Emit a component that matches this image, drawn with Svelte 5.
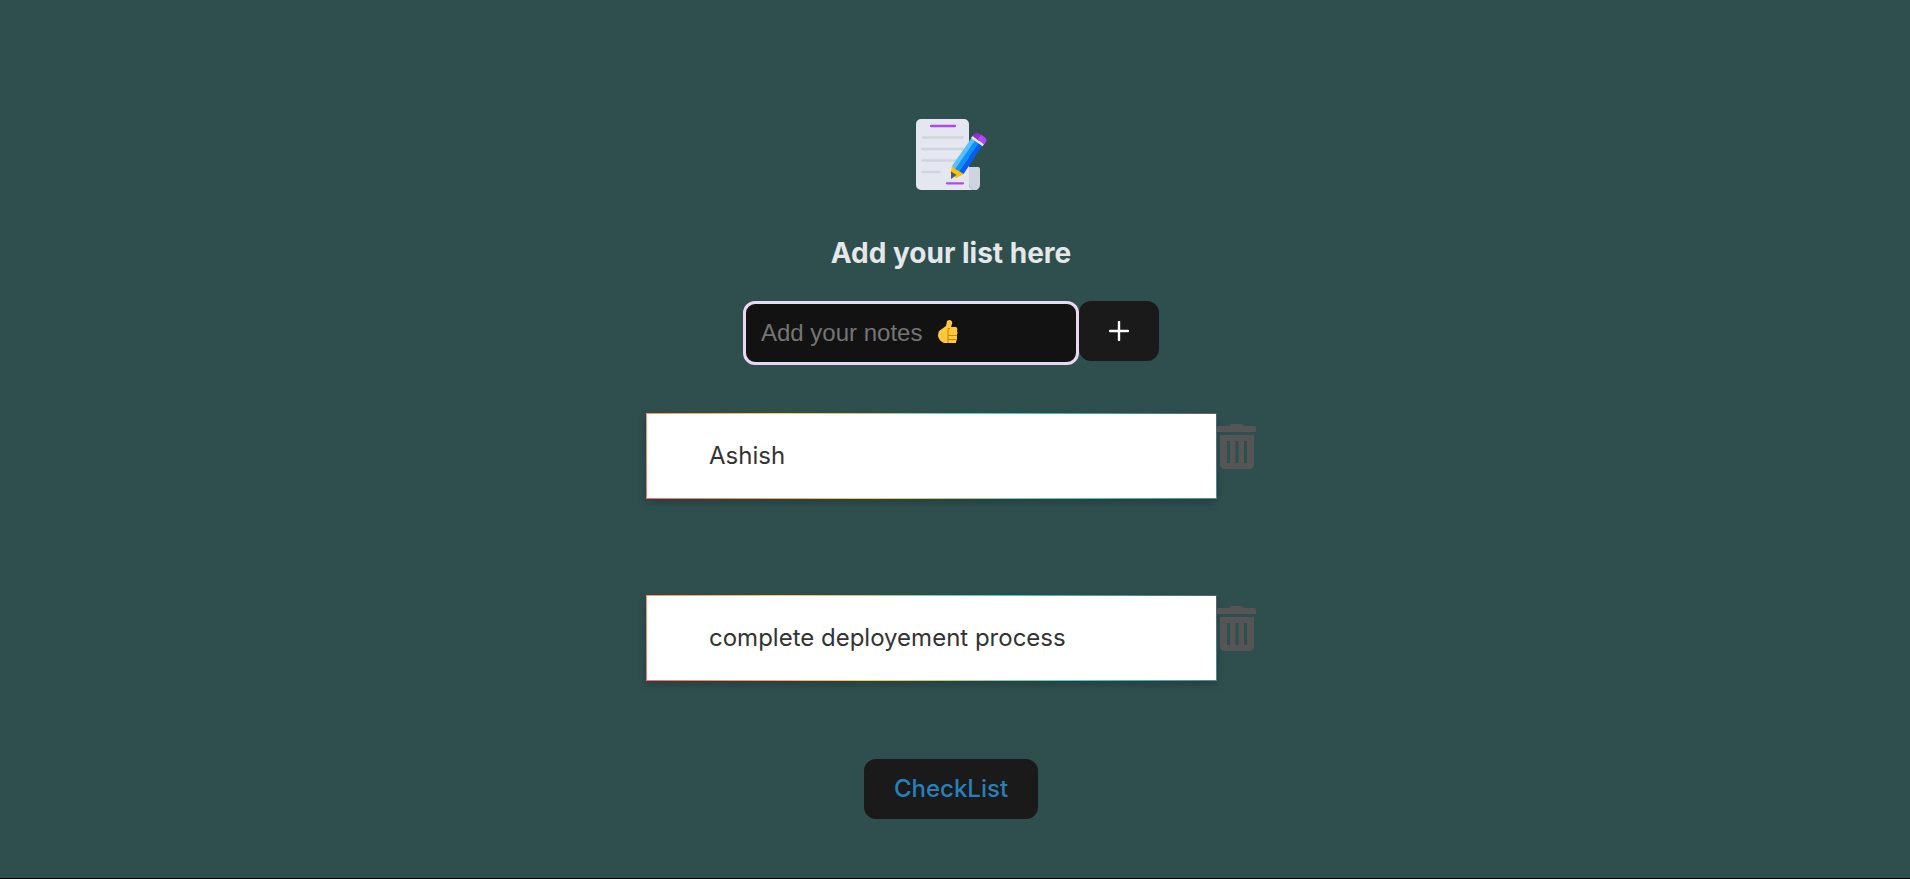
<script>
  let notes = $state(['Ashish', 'complete deployement process']);
  let draft = $state('');

  function add(event) {
    event.preventDefault();
    if (draft.trim()) {
      notes.push(draft.trim());
      draft = '';
    }
  }
</script>

<main>
  <svg class="logo" viewBox="0 0 71 71" aria-hidden="true">
    <path d="M5 0h43a5 5 0 0 1 5 5v60a6 6 0 0 0 5 6H5a5 5 0 0 1-5-5V5a5 5 0 0 1 5-5z" fill="#e4e7ef" />
    <path d="M53 48v17a6 6 0 0 0 5 6 5 5 0 0 0 6-5V50a2 2 0 0 0-2-2z" fill="#ced5e0" />
    <path d="M6.500 18.500h40M6.500 30h40M6.500 41.500h40M6.500 53h17" stroke="#ced5e0" stroke-width="2.300" stroke-linecap="round" />
    <path d="M15 7h24M31 64.300h16" stroke="#b446f5" stroke-width="2.300" stroke-linecap="round" />
    <path d="M36 47l12 8-8 4-5.500-5z" fill="#ffbe00" />
    <path d="M35 52.500l5.500 3.500-5.500 4z" fill="#465a7f" />
    <path d="M36 47L55.500 19l4 2.700L39 50z" fill="#5cbeff" />
    <path d="M39 50L59 21.500l4 2.700L43 52z" fill="#0a93ff" />
    <path d="M43 52l20-28 3.500 2.500L47.500 55z" fill="#055fea" />
    <path d="M55 19l2-2.500 11.500 8-2 2.700z" fill="#e9edf5" />
    <path d="M56.500 17l2-2a4 4 0 0 1 5 0l3 2-3.500 5z" fill="#8e30d2" />
    <path d="M61.500 20.500l3.500-5 4 3a3.500 3.500 0 0 1 1 4.500l-2 2.500z" fill="#b446f5" />
  </svg>

  <h1>Add your list here</h1>

  <form onsubmit={add}>
    <div class="field">
      <input type="text" aria-label="Add your notes" placeholder="Add your notes" bind:value={draft} />
      {#if !draft}
        <svg class="thumb" viewBox="0 0 20 24" aria-hidden="true">
          <path d="M1 11L8 6 9 1q1-1 3-1 3 1 2 4l-1 3h5q2 1 1 4 1 1 0 4v4q-1 2-1 4H6q-5-2-6-7 0-3 1-5z" fill="#ffc83d" />
          <path d="M10 23V8.500h2M10 15.500h9M10 19.500h8" fill="none" stroke="#d67d00" />
        </svg>
      {/if}
    </div>
    <button class="add" aria-label="Add note">
      <svg viewBox="0 0 20 20" aria-hidden="true"><path d="M10 1v18M1 10h18" stroke="#fff" stroke-width="2.400" stroke-linecap="round" /></svg>
    </button>
  </form>

  <ul>
    {#each notes as note, index}
      <li>
        <p>{note}</p>
        <button class="remove" aria-label={`Delete ${note}`} onclick={() => notes.splice(index, 1)}>
          <svg viewBox="0 0 39 45" aria-hidden="true">
            <path d="M0 3.500Q0 2 2 2h10l2-2h11l2 2h10q2 0 2 1.500V8H0z" />
            <path fill-rule="evenodd" d="M3 11h34v29q0 5-5 5H8q-5 0-5-5zM10 17v22h3V17zM18.500 17v22h3V17zM27 17v22h3V17z" />
          </svg>
        </button>
      </li>
    {/each}
  </ul>

  <button class="check">CheckList</button>
</main>

<style>
  :global(body) {
    margin: 0;
    background: #2f4f4f;
  }

  main {
    box-sizing: border-box;
    min-height: 100vh;
    padding: 119px 8px 59px 0;
    border-bottom: 1px solid #000;
    display: flex;
    flex-direction: column;
    align-items: center;
    font-family: Inter, sans-serif;
    font-size: 24px;
    line-height: 36px;
    color: #e4e8e8;
  }

  .logo {
    width: 71px;
    height: 71px;
    overflow: visible;
  }

  h1 {
    margin: 45px 0 29px;
    font-size: 28px;
    line-height: 37px;
    font-weight: 700;
  }

  form {
    display: flex;
    align-items: flex-start;
  }

  .field {
    position: relative;
  }

  input {
    box-sizing: border-box;
    display: block;
    width: 336px;
    height: 64px;
    padding: 0 15px;
    border: 3px solid #e9d8f2;
    border-radius: 12px;
    background: #121212;
    color: #fff;
    font-family: "Liberation Sans", Arial, sans-serif;
    font-size: 24px;
    outline: none;
  }

  input::placeholder {
    color: #757575;
    opacity: 1;
  }

  .thumb {
    position: absolute;
    left: 195px;
    top: 19px;
    width: 20px;
    height: 24px;
    pointer-events: none;
  }

  button {
    padding: 0;
    border: 0;
    font: inherit;
    cursor: pointer;
  }

  .add,
  .check {
    height: 60px;
    border-radius: 12px;
    background: #1a1a1a;
  }

  .add {
    width: 80px;
    display: grid;
    place-items: center;
  }

  .add svg {
    width: 20px;
    height: 20px;
  }

  ul {
    margin: 48px 0 78px;
    padding: 0;
    list-style: none;
    display: grid;
    gap: 96px;
  }

  li {
    display: flex;
    align-items: flex-start;
  }

  p {
    box-sizing: border-box;
    width: 571px;
    margin: 0;
    padding: 24px 62px;
    border: 1px solid;
    border-image: linear-gradient(45deg, #ff6b6b, #feca57, #4ecdc4, #556270) 1;
    background: #fff;
    box-shadow: 0 4px 8px rgb(0 0 0 / 20%);
    color: #333;
  }

  .remove {
    margin-top: 11px;
    background: none;
    color: #555;
  }

  .remove svg {
    display: block;
    width: 39px;
    height: 45px;
    fill: currentColor;
  }

  .check {
    padding: 0 30px;
    font-weight: 500;
    color: #2980b9;
  }
</style>
